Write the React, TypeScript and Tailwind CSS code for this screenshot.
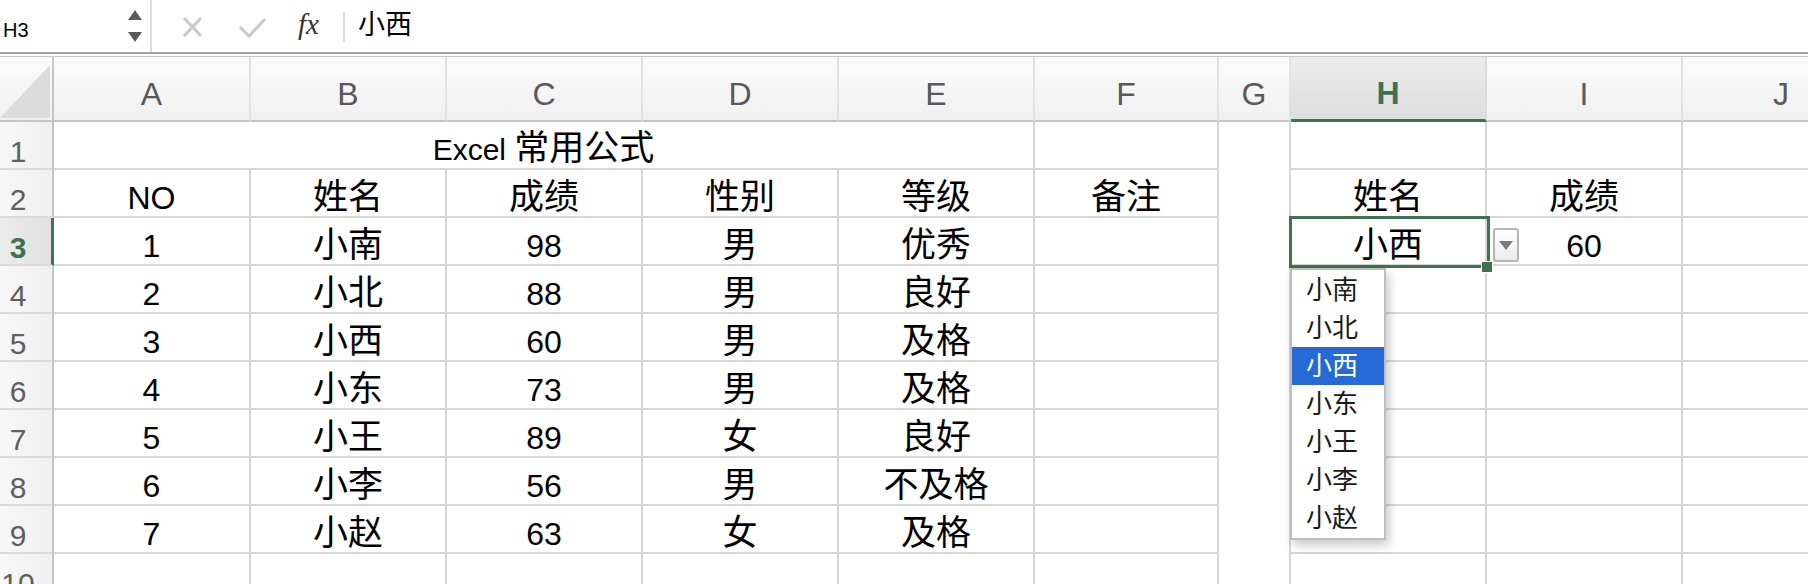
import React from "react";

const font = "font-['Liberation_Sans','Noto_Sans_CJK_SC',sans-serif]";

const headers = ["A", "B", "C", "D", "E", "F", "G", "H", "I", "J"];

const rows: string[][] = [
  ["NO", "姓名", "成绩", "性别", "等级", "备注", "", "姓名", "成绩", ""],
  ["1", "小南", "98", "男", "优秀", "", "", "小西", "60", ""],
  ["2", "小北", "88", "男", "良好", "", "", "", "", ""],
  ["3", "小西", "60", "男", "及格", "", "", "", "", ""],
  ["4", "小东", "73", "男", "及格", "", "", "", "", ""],
  ["5", "小王", "89", "女", "良好", "", "", "", "", ""],
  ["6", "小李", "56", "男", "不及格", "", "", "", "", ""],
  ["7", "小赵", "63", "女", "及格", "", "", "", "", ""],
  ["", "", "", "", "", "", "", "", "", ""],
];

const names = ["小南", "小北", "小西", "小东", "小王", "小李", "小赵"];

// CJK glyphs in the reference run larger than the latin ones
function Mixed({ text }: { text: string }) {
  return (
    <>
      {text.split(/([\u4e00-\u9fff]+)/).map((part, i) =>
        /[\u4e00-\u9fff]/.test(part) ? (
          <span key={i} className="text-[35px]">
            {part}
          </span>
        ) : (
          part
        )
      )}
    </>
  );
}

function Toolbar() {
  return (
    <div className={`flex h-[52px] items-start bg-white ${font}`}>
      <div className="relative flex h-full w-[152px] shrink-0 border-r-2 border-[#dedede]">
        <span className="pl-[3px] pt-[20px] text-[20px] leading-[20px] text-black">H3</span>
        <svg className="absolute left-[127px] top-[9px]" width="17" height="35" viewBox="0 0 17 35">
          <polygon points="1,11 15,11 8,1" fill="#5a5a5a" />
          <polygon points="1,23 15,23 8,33" fill="#5a5a5a" />
        </svg>
      </div>
      <svg className="ml-[30px] mt-[17px]" width="21" height="20" viewBox="0 0 21 20">
        <path d="M2 1 L19 19 M19 1 L2 19" stroke="#c9c9c9" strokeWidth="3" />
      </svg>
      <svg className="ml-[35px] mt-[17px]" width="29" height="22" viewBox="0 0 29 22">
        <path d="M2 10 L11 19 L27 2" stroke="#c9c9c9" strokeWidth="3" fill="none" />
      </svg>
      <span className="ml-[31px] mt-[10px] w-[30px] font-['Liberation_Serif',serif] text-[29px] italic leading-[28px] text-[#333]">
        fx
      </span>
      <div className="ml-[15px] mt-[12px] h-[30px] w-[2px] bg-[#dcdcdc]" />
      <span className="ml-[13px] mt-[11px] text-[27px] leading-[28px] text-black">小西</span>
    </div>
  );
}

function ColHeader({ label, selected }: { label: string; selected?: boolean }) {
  return (
    <div
      className={
        selected
          ? "flex items-end justify-center border-b-[3px] border-r-2 border-b-[#3d7350] border-r-[#dcdcdc] bg-linear-to-b from-[#ececec] to-[#dedede] pb-[10px] text-[32px] font-bold leading-[32px] text-[#3d7350]"
          : "flex items-end justify-center border-b-2 border-r-2 border-b-[#c4c4c4] border-r-[#e2e2e2] bg-linear-to-b from-[#fbfbfb] to-[#f0f0f0] pb-[10px] text-[32px] leading-[32px] text-[#595959]"
      }
    >
      {label}
    </div>
  );
}

function RowHeader({ n, selected }: { n: number; selected?: boolean }) {
  return (
    <div
      className={
        selected
          ? "flex items-end justify-center border-b-2 border-r-[3px] border-b-[#dadada] border-r-[#3d7350] bg-linear-to-r from-[#ececec] to-[#e0e0e0] pb-[1px] pr-[15px] text-[30px] font-bold leading-[30px] text-[#3d7350]"
          : "flex items-end justify-center border-b-2 border-r-2 border-b-[#dadada] border-r-[#c4c4c4] bg-linear-to-r from-[#f8f8f8] to-[#efefef] pb-[1px] pr-[16px] text-[30px] leading-[30px] text-[#5e5e5e]"
      }
    >
      {n}
    </div>
  );
}

function Cell({ text, col }: { text: string; col: number }) {
  const border = col === 6 ? "border-r-2" : "border-r-2 border-b-2";
  return (
    <div
      className={`flex items-end justify-center overflow-hidden whitespace-nowrap ${border} border-[#d6d6d6] bg-white pb-[2px] text-[32px] leading-[32px] text-black`}
    >
      <span>
        <Mixed text={text} />
      </span>
    </div>
  );
}

function Grid() {
  return (
    <div className={`relative h-[527px] w-[1808px] overflow-hidden ${font}`}>
      <div className="grid w-[1881px] grid-cols-[54px_197px_196px_196px_196px_196px_184px_72px_196px_196px_198px] grid-rows-[65px_repeat(10,48px)]">
        <div className="relative border-b-2 border-r-2 border-b-[#c4c4c4] border-r-[#c4c4c4] bg-linear-to-b from-[#fbfbfb] to-[#f0f0f0]">
          <svg className="absolute left-0 top-[8px]" width="51" height="54" viewBox="0 0 51 54">
            <polygon points="50,0 50,53 0,53" fill="#dcdcdc" />
          </svg>
        </div>
        {headers.map((h) => (
          <ColHeader key={h} label={h} selected={h === "H"} />
        ))}

        <RowHeader n={1} />
        <div className="col-span-5 flex items-end justify-center border-b-2 border-r-2 border-[#d6d6d6] bg-white pb-[2px] text-[30px] leading-[32px] text-black">
          <span>
            <Mixed text="Excel 常用公式" />
          </span>
        </div>
        {[5, 6, 7, 8, 9].map((c) => (
          <Cell key={c} text="" col={c} />
        ))}

        {rows.map((r, i) => (
          <React.Fragment key={i}>
            <RowHeader n={i + 2} selected={i === 1} />
            {r.map((t, c) => (
              <Cell key={c} text={t} col={c} />
            ))}
          </React.Fragment>
        ))}
      </div>

      {/* active cell H3 */}
      <div className="absolute left-[1289px] top-[159px] h-[52px] w-[201px] border-[3px] border-[#3d7350]" />
      <div className="absolute left-[1482px] top-[205px] h-[10px] w-[10px] bg-[#3d7350] outline outline-1 outline-white" />

      {/* validation dropdown button */}
      <div className="absolute left-[1493px] top-[171px] flex h-[34px] w-[26px] items-center justify-center rounded-[3px] border-2 border-[#b4b4b4] bg-linear-to-b from-white to-[#ececec]">
        <svg width="14" height="9" viewBox="0 0 14 9">
          <polygon points="0,0 14,0 7,9" fill="#7a7a7a" />
        </svg>
      </div>

      {/* validation list */}
      <div className="absolute left-[1290px] top-[211px] w-[96px] border-2 border-[#bdbdbd] bg-white py-[1px] shadow-[3px_5px_10px_rgba(0,0,0,0.22)]">
        {names.map((n) => (
          <div
            key={n}
            className={
              n === "小西"
                ? "flex h-[38px] items-center bg-[#266ad6] pl-[14px] text-[26px] leading-[26px] text-white"
                : "flex h-[38px] items-center pl-[14px] text-[26px] leading-[26px] text-[#1a1a1a]"
            }
          >
            {n}
          </div>
        ))}
      </div>
    </div>
  );
}

export default function App() {
  return (
    <div className="h-[584px] w-[1808px] overflow-hidden bg-white">
      <Toolbar />
      <div className="h-[2px] bg-[#a2a2a2]" />
      <div className="h-[2px] bg-white" />
      <div className="h-[1px] bg-[#c8c8c8]" />
      <Grid />
    </div>
  );
}
